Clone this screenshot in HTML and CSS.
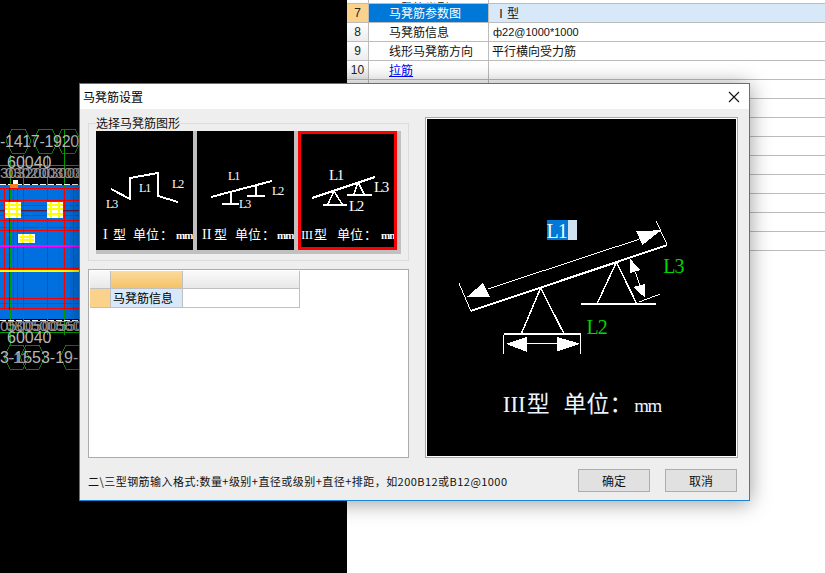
FILE: index.html
```html
<!DOCTYPE html>
<html lang="zh-CN">
<head>
<meta charset="utf-8">
<title>马凳筋设置</title>
<link rel="stylesheet" href="styles.css">
</head>
<body>
<div class="desktop">
  <svg class="cad" viewBox="0 0 347 573" width="347" height="573">
    <rect class="blue" x="0" y="185" width="347" height="134"/>
    <g class="hex">
      <polygon points="6,141 12,129 25,129 31,141 25,153 12,153"/>
      <polygon points="33,141 39,129 52,129 58,141 52,153 39,153"/>
      <polygon points="56,141 62,129 75,129 81,141 75,153 62,153"/>
      <polygon points="4,357 10,345 23,345 29,357 23,369 10,369"/>
      <polygon points="20,357 26,345 39,345 45,357 39,369 26,369"/>
      <polygon points="60,357 66,345 79,345 85,357 79,369 66,369"/>
    </g>
    <g class="green">
      <path d="M10 155V345M23 155V335M47 155V335M64 130V335M0 165H80M0 332H80"/>
    </g>
    <g class="red">
      <path d="M0 188H80M0 200H80M0 205H80M0 211H80M0 215H80M0 220H80M0 227H80M0 230H80M0 268H80M0 298H80M0 303H80M0 308H80"/>
      <path d="M4 188V310M13 188V310M17 188V310M23 188V310M47 188V310M64 188V310M73 188V310"/>
    </g>
    <path class="dark" d="M9 188V310M0 210H80"/>
    <path class="magenta" d="M0 246H80"/>
    <path class="yellow" d="M0 271H80"/>
    <path class="dash" d="M0 184H80"/>
    <path class="dash" d="M0 320H80"/>
    <rect class="orange" x="10" y="184" width="8" height="4"/>
    <rect class="whitebox" x="13" y="180" width="5" height="4"/>
    <g class="rebar">
      <rect class="whitebox" x="5" y="202" width="16" height="16"/>
      <rect class="whitebox" x="47" y="202" width="16" height="16"/>
      <rect class="whitebox" x="18" y="234" width="17" height="9"/>
      <path class="yellow" d="M5 205H21M5 209H21M5 214H21M9 202V218M17 202V218M47 205H63M47 209H63M47 214H63M51 202V218M59 202V218M20 237H34M20 240H34M23 234V243M30 234V243"/>
    </g>
    <g class="cadtext">
      <text class="tight" x="0" y="147">-1417-1920</text>
      <text x="7" y="168">60040</text>
      <text class="ghost" x="0" y="178">3032003008</text>
      <text class="ghost" x="5" y="178">0302003007</text>
      <text class="ghost" x="0" y="331">05005005500</text>
      <text class="ghost" x="6" y="331">0805005600</text>
      <text x="7" y="343">60040</text>
      <text x="0" y="363">3-1553-19-2</text>
      <text class="ghost" x="8" y="363">-11</text>
    </g>
  </svg>

  <div class="sheet">
    <div class="row stub"><div class="idx"></div><div class="name">马凳筋类型</div><div class="val"></div></div>
    <div class="row current"><div class="idx">7</div><div class="name">马凳筋参数图</div><div class="val val-roman">Ⅰ型</div></div>
    <div class="row"><div class="idx">8</div><div class="name">马凳筋信息</div><div class="val val-small">ф22@1000*1000</div></div>
    <div class="row"><div class="idx">9</div><div class="name">线形马凳筋方向</div><div class="val">平行横向受力筋</div></div>
    <div class="row"><div class="idx">10</div><div class="name"><a class="link">拉筋</a></div><div class="val"></div></div>
    <div class="row"><div class="idx"></div><div class="name"></div><div class="val"></div></div>
    <div class="row"><div class="idx"></div><div class="name"></div><div class="val"></div></div>
    <div class="row"><div class="idx"></div><div class="name"></div><div class="val"></div></div>
    <div class="row"><div class="idx"></div><div class="name"></div><div class="val"></div></div>
    <div class="row"><div class="idx"></div><div class="name"></div><div class="val"></div></div>
    <div class="row"><div class="idx"></div><div class="name"></div><div class="val"></div></div>
    <div class="row"><div class="idx"></div><div class="name"></div><div class="val"></div></div>
    <div class="row"><div class="idx"></div><div class="name"></div><div class="val"></div></div>
    <div class="row"><div class="idx"></div><div class="name"></div><div class="val"></div></div>
  </div>

  <section class="dialog">
    <header class="titlebar">
      <span class="title">马凳筋设置</span>
      <svg class="close" viewBox="0 0 12 12" width="12" height="12"><path d="M1 1L11 11M11 1L1 11"/></svg>
    </header>
    <div class="main">
      <div class="leftcol">
        <div class="group">
          <span class="legend">选择马凳筋图形</span>
          <div class="thumbs">
            <svg class="thumb" viewBox="96 131 97 119" width="97" height="119">
              <path class="beam" d="M111 189L130 199V178L158 173V196L178 202"/>
              <text class="tlabel" x="139" y="192">L1</text>
              <text class="tlabel" x="172" y="188">L2</text>
              <text class="tlabel" x="106" y="208">L3</text>
              <text class="tcap" y="239"><tspan class="serif" x="103">I</tspan><tspan x="113">型</tspan><tspan x="133">单位</tspan><tspan x="160">：</tspan><tspan class="mm" x="176">mm</tspan></text>
            </svg>
            <svg class="thumb" viewBox="197 131 97 119" width="97" height="119">
              <path class="beam" d="M211 197L272 181M231 193V204M222 204H239M256 185V196M247 196H265"/>
              <text class="tlabel" x="228" y="180">L1</text>
              <text class="tlabel" x="272" y="195">L2</text>
              <text class="tlabel" x="239" y="208">L3</text>
              <text class="tcap" y="239"><tspan class="serif" x="202">II</tspan><tspan x="214">型</tspan><tspan x="235">单位</tspan><tspan x="262">：</tspan><tspan class="mm" x="277">mm</tspan></text>
            </svg>
            <svg class="thumb thumb-on" viewBox="301 134 93 113" width="99" height="119">
              <path class="beam" d="M312 198L375 177M323 205H347M347 195H372"/>
              <path class="strut" d="M334 191L328 204M334 191L342 204M358 182L354 194M358 182L364 194"/>
              <text class="tlabel tlabel-b" x="329" y="180">L1</text>
              <text class="tlabel tlabel-b" x="374" y="192">L3</text>
              <text class="tlabel tlabel-b" x="349" y="211">L2</text>
              <text class="tcap" y="239"><tspan class="serif roman3" x="301">III</tspan><tspan x="314">型</tspan><tspan x="337">单位</tspan><tspan x="364">：</tspan><tspan class="mm" x="381">mm</tspan></text>
            </svg>
          </div>
        </div>
        <div class="gridpanel">
          <div class="minigrid">
            <div class="mh"></div><div class="mh mh-on"></div><div class="mh"></div>
            <div class="mi"></div><div class="mn">马凳筋信息</div><div class="mv"></div>
          </div>
        </div>
      </div>
      <div class="preview">
        <svg class="bigpic" viewBox="427 119 310 337" width="310" height="337">
          <rect class="sel" x="547" y="220" width="21" height="20"/>
          <rect class="sel2" x="568" y="220" width="9" height="20"/>
          <text class="biglabel" x="547" y="238">L1</text>
          <path class="beam" d="M471 311L668 245"/>
          <path class="thin" d="M459 283L471 311M657 221L668 245M488 289L640 239"/>
          <polygon class="fill" points="467,297 483,283 490,297"/>
          <polygon class="fill" points="662,230 637,231 643,245"/>
          <path class="strut" d="M541 288L522 333M541 288L564 333M617 262L598 303M617 262L637 303"/>
          <path class="beam" d="M504 334H581M581 304H657"/>
          <path class="thin" d="M504 335V354M581 335V354M526 344H558M636 272L641 287M640 302L661 294"/>
          <polygon class="fill" points="506,344 527,337 527,352"/>
          <polygon class="fill" points="581,344 557,337 557,352"/>
          <polygon class="fill" points="631,259 631,273 641,270"/>
          <polygon class="fill" points="646,298 634,287 646,284"/>
          <text class="biglabel glabel" x="664" y="273">L3</text>
          <text class="biglabel glabel" x="587" y="334">L2</text>
          <text class="bigcap" y="412"><tspan class="serif" x="503">III</tspan><tspan x="527">型</tspan><tspan x="564">单位</tspan><tspan x="610">：</tspan><tspan class="bigmm" x="635">mm</tspan></text>
        </svg>
      </div>
    </div>
    <footer class="footer">
      <span class="hint">二\三型钢筋输入格式:数量+级别+直径或级别+直径+排距，如200B12或B12@1000</span>
      <button class="btn">确定</button>
      <button class="btn">取消</button>
    </footer>
  </section>
</div>
</body>
</html>
```
FILE: styles.css
```css
* { box-sizing: border-box; }
html, body { margin: 0; padding: 0; }
body {
  width: 825px;
  height: 573px;
  overflow: hidden;
  background: #fff;
  font-family: "Noto Sans CJK SC", "Liberation Sans", sans-serif;
  font-size: 12px;
  color: #000;
}
.desktop { position: relative; display: flex; width: 825px; height: 573px; overflow: hidden; }

/* CAD canvas */
.cad { flex: 0 0 347px; display: block; background: #000; shape-rendering: crispEdges; }
.blue { fill: #0070e0; }
.hex polygon { fill: none; stroke: #0a800a; stroke-width: 1; }
.green path { fill: none; stroke: #00a000; stroke-width: 1; }
.red path { fill: none; stroke: #f00; stroke-width: 1; }
.dark { fill: none; stroke: #5a1a3a; stroke-width: 1; }
.magenta { fill: none; stroke: #f0f; stroke-width: 2; }
.yellow { fill: none; stroke: #ff0; stroke-width: 2; }
.dash { fill: none; stroke: #fff; stroke-width: 1; stroke-dasharray: 6 2; }
.orange { fill: #f08020; }
.whitebox { fill: #fff; }
.cadtext text { font-family: "Liberation Sans", sans-serif; font-size: 16px; fill: #b8b8b8; }
.cadtext .tight { letter-spacing: -0.3px; }
.cadtext .ghost { fill: #989298; font-size: 15px; }

/* Property sheet */
.sheet { flex: 1; display: flex; flex-direction: column; background: #fff; }
.row {
  display: grid;
  grid-template-columns: 22px 120px 1fr;
  height: 19px;
  border-bottom: 1px solid #bcbcbc;
  line-height: 18px;
}
.stub { height: 4px; overflow: hidden; }
.stub .name { display: flex; align-items: flex-end; line-height: 15px; }
.idx {
  text-align: center;
  font-family: "Liberation Sans", sans-serif;
  color: #222;
  background: linear-gradient(#fff, #ececec);
  border-right: 1px solid #bcbcbc;
}
.name { padding-left: 20px; border-right: 1px solid #bcbcbc; color: #111; }
.val { padding-left: 3px; color: #111; }
.val-roman { padding-left: 6px; }
.val-small { padding-left: 4px; font-family: "Liberation Sans", sans-serif; font-size: 11px; }
.link { color: #00f; text-decoration: underline; }
.current .idx { background: #fbd28c; }
.current .name { background: #0078d7; color: #fff; }
.current .val { background: #d7e8f8; }

/* Dialog window */
.dialog {
  position: absolute;
  left: 79px;
  top: 83px;
  width: 671px;
  height: 418px;
  display: flex;
  flex-direction: column;
  background: #eeeeee;
  border: 1px solid #1a84d8;
  box-shadow: 0 2px 20px rgba(0, 0, 0, 0.4);
}
.titlebar {
  flex: 0 0 25px;
  display: flex;
  align-items: center;
  justify-content: space-between;
  padding: 0 9px 0 3px;
  background: #fff;
}
.title { font-size: 12px; letter-spacing: 0; }
.close { display: block; }
.close path { fill: none; stroke: #111; stroke-width: 1.1; }

.main { display: flex; gap: 16px; padding: 8px 11px 0 8px; }
.leftcol { display: flex; flex-direction: column; gap: 8px; width: 321px; padding-top: 6px; }
.group {
  position: relative;
  height: 138px;
  padding: 7px 0 0 7px;
  border: 1px solid #dcdcdc;
}
.legend { position: absolute; left: 7px; top: -8px; line-height: 14px; background: #eeeeee; color: #111; }
.thumbs {
  display: flex;
  gap: 4px;
  width: 305px;
  padding: 0 4px 4px 0;
  background: #c0c0c0;
}
.thumb { display: block; background: #000; shape-rendering: crispEdges; }
.thumb-on { border: 3px solid #f00; }
.beam { fill: none; stroke: #fff; stroke-width: 2; }
.strut { fill: none; stroke: #fff; stroke-width: 1.500; }
.thin { fill: none; stroke: #fff; stroke-width: 1; }
.fill { fill: #fff; }
.tlabel { font-family: "Liberation Serif", serif; font-size: 12px; letter-spacing: -1px; fill: #fff; }
.tlabel-b { font-size: 15px; letter-spacing: -1.5px; }
.tcap { font-family: "Noto Sans CJK SC", sans-serif; font-size: 13px; fill: #fff; }
.tcap .serif { font-size: 14px; }
.tcap .roman3 { font-size: 13px; letter-spacing: -0.5px; }
.serif { font-family: "Liberation Serif", serif; }
.mm { font-family: "Liberation Serif", serif; font-size: 11px; font-weight: 700; letter-spacing: -1px; }

.gridpanel { height: 189px; padding: 1px; background: #fff; border: 1px solid #ababab; }
.minigrid { display: grid; grid-template-columns: 21px 72px 117px; grid-template-rows: 18px 19px; width: 210px; }
.mh {
  background: linear-gradient(#fafafa, #e8e8e8);
  border-right: 1px solid #c0c0c0;
  border-bottom: 1px solid #c0c0c0;
}
.mh-on { background: linear-gradient(#fddb9c, #f5c266); }
.mi { background: #fbd28c; border-right: 1px solid #c0c0c0; border-bottom: 1px solid #c0c0c0; }
.mn {
  padding-left: 2px;
  line-height: 18px;
  background: #d7e8f8;
  border-right: 1px solid #c0c0c0;
  border-bottom: 1px solid #c0c0c0;
}
.mv { border-right: 1px solid #c0c0c0; border-bottom: 1px solid #c0c0c0; }

.preview {
  width: 313px;
  height: 341px;
  padding: 1px;
  background: #fff;
  border: 1px solid #a8a8a8;
  display: flex;
}
.bigpic { display: block; background: #000; shape-rendering: crispEdges; }
.sel { fill: #0078d7; }
.sel2 { fill: #d0e2f2; }
.biglabel { font-family: "Liberation Serif", serif; font-size: 20px; letter-spacing: -1px; fill: #fff; }
.glabel { fill: #00d800; }
.bigcap { font-family: "Noto Sans CJK SC", sans-serif; font-size: 23px; fill: #e8f4ff; }
.bigmm { font-family: "Liberation Serif", serif; font-size: 19px; letter-spacing: -1.5px; }

.footer { display: flex; align-items: center; gap: 15px; padding: 11px 12px 0 8px; }
.hint { flex: 1; font-size: 11px; letter-spacing: 0.46px; color: #111; white-space: nowrap; }
.btn {
  width: 72px;
  height: 23px;
  padding: 0;
  font-family: "Noto Sans CJK SC", sans-serif;
  font-size: 12px;
  line-height: 20px;
  color: #111;
  background: #e1e1e1;
  border: 1px solid #adadad;
}
```
